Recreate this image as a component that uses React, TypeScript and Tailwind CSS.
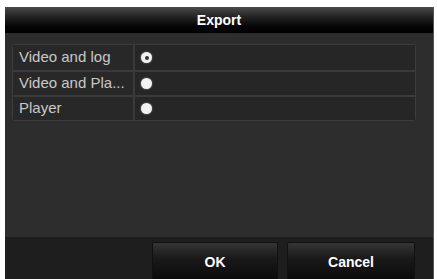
import React from "react";

const rows = [
  { label: "Video and log", selected: true },
  { label: "Video and Pla...", selected: false },
  { label: "Player", selected: false },
];

function Radio({ selected }: { selected: boolean }) {
  return (
    <div className="w-[11px] h-[11px] rounded-full bg-[#f2f2f2] flex items-center justify-center shadow-[0_0_2px_rgba(255,255,255,0.5)]">
      {selected && <div className="w-[4px] h-[4px] rounded-full bg-[#333]" />}
    </div>
  );
}

export default function App() {
  return (
    <div className="w-[437px] h-[279px] bg-white pl-[5px] pt-[7px] pr-[3px] overflow-hidden" style={{ fontFamily: "Arial, 'Liberation Sans', sans-serif" }}>
      <div className="w-full h-[272px] flex flex-col bg-[#2d2d2d] border-r border-[#555]">
        <div className="h-[26px] flex items-center justify-center bg-[linear-gradient(to_bottom,#4a4a4a_0%,#262626_35%,#050505_75%,#000_100%)] text-white text-[14px] font-bold">
          Export
        </div>
        <div className="flex-1 pl-[7px] pr-[17px] pt-[11px]">
          <div className="border border-[#3c3c3c] rounded-[3px]">
            {rows.map((r, i) => (
              <div key={i} className={`flex h-[25px] ${i > 0 ? "border-t-[2px] border-[#3a3a3a]" : ""}`}>
                <div className="w-[122px] flex items-center pl-[6px] text-[#c9c9c9] text-[15px] bg-[#282828] border-r-[2px] border-[#3a3a3a] whitespace-nowrap overflow-hidden">
                  {r.label}
                </div>
                <div className="flex-1 flex items-center pl-[6px] bg-[#262626]">
                  <Radio selected={r.selected} />
                </div>
              </div>
            ))}
          </div>
        </div>
        <div className="h-[42px] bg-[#1e1e1e] flex items-start pt-[5px] pl-[147px] gap-[9px]">
          <div className="w-[126px] h-[40px] flex items-center justify-center text-white text-[14px] font-bold bg-[linear-gradient(to_bottom,#353535_0%,#1a1a1a_40%,#0a0a0a_100%)] border border-[#111] rounded-[2px]">
            OK
          </div>
          <div className="w-[128px] h-[40px] flex items-center justify-center text-white text-[14px] font-bold bg-[linear-gradient(to_bottom,#353535_0%,#1a1a1a_40%,#0a0a0a_100%)] border border-[#111] rounded-[2px]">
            Cancel
          </div>
        </div>
      </div>
    </div>
  );
}
